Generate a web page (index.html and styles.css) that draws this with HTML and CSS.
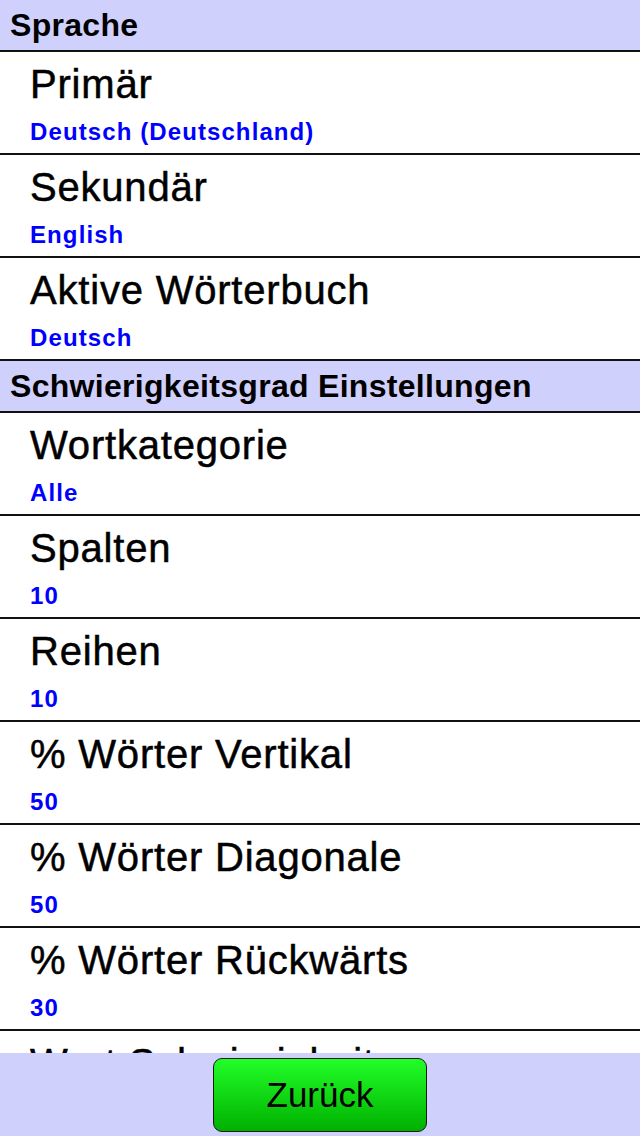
FILE: index.html
```html
<!DOCTYPE html>
<html lang="de">
<head>
    <meta charset="UTF-8">
    <meta name="viewport" content="width=device-width, initial-scale=1.0">
    <title>Einstellungen</title>
    <link rel="stylesheet" href="styles.css">
</head>
<body>
    <div class="screen">
        <div class="list">
            <div class="group-header">Sprache</div>
            <div class="item">
                <div class="item-title">Primär</div>
                <div class="item-value">Deutsch (Deutschland)</div>
            </div>
            <div class="item">
                <div class="item-title">Sekundär</div>
                <div class="item-value">English</div>
            </div>
            <div class="item">
                <div class="item-title">Aktive Wörterbuch</div>
                <div class="item-value">Deutsch</div>
            </div>

            <div class="group-header">Schwierigkeitsgrad Einstellungen</div>
            <div class="item">
                <div class="item-title">Wortkategorie</div>
                <div class="item-value">Alle</div>
            </div>
            <div class="item">
                <div class="item-title">Spalten</div>
                <div class="item-value">10</div>
            </div>
            <div class="item">
                <div class="item-title">Reihen</div>
                <div class="item-value">10</div>
            </div>
            <div class="item">
                <div class="item-title">% Wörter Vertikal</div>
                <div class="item-value">50</div>
            </div>
            <div class="item">
                <div class="item-title">% Wörter Diagonale</div>
                <div class="item-value">50</div>
            </div>
            <div class="item">
                <div class="item-title">% Wörter Rückwärts</div>
                <div class="item-value">30</div>
            </div>
            <!-- wird von der unteren Leiste größtenteils verdeckt -->
            <div class="item">
                <div class="item-title">Wort Schwierigkeit</div>
            </div>
        </div>

        <div class="footer">
            <button class="back-button">Zurück</button>
        </div>
    </div>
</body>
</html>
```

FILE: styles.css
```css
/* Grundeinstellungen */
body {
    margin: 0;
    font-family: "Liberation Sans", Arial, sans-serif;
    background-color: #ffffff;
    color: #000000;
}

.screen {
    display: flex;
    flex-direction: column;
    height: 100vh;
}

/* Liste der Einstellungen */
.list {
    flex: 1;
    overflow: hidden;
}

.group-header {
    height: 52px;
    box-sizing: border-box;
    padding: 9px 10px;
    background-color: #d0d0fc;
    border-bottom: 2px solid #111111;
    font-size: 32px;
    font-weight: bold;
    line-height: 32px;
    letter-spacing: 0.3px;
}

.item {
    height: 103px;
    box-sizing: border-box;
    padding: 12px 10px 0 30px;
    border-bottom: 2px solid #111111;
}

.item-title {
    font-size: 40px;
    line-height: 40px;
    letter-spacing: 0.8px;
    -webkit-text-stroke: 0.5px #000000;
}

.item-value {
    margin-top: 16px;
    font-size: 24px;
    line-height: 24px;
    font-weight: bold;
    letter-spacing: 1.1px;
    color: #0000ff;
}

/* Untere Leiste mit Knopf */
.footer {
    height: 83px;
    flex-shrink: 0;
    display: flex;
    justify-content: center;
    align-items: center;
    background-color: #d0d0fc;
}

.back-button {
    width: 214px;
    height: 74px;
    border: 1px solid #1a1a1a;
    border-radius: 9px;
    background: linear-gradient(to bottom, #22ff28, #00b000);
    font-family: "Liberation Sans", Arial, sans-serif;
    font-size: 35px;
    color: #000000;
    cursor: pointer;
}
```
